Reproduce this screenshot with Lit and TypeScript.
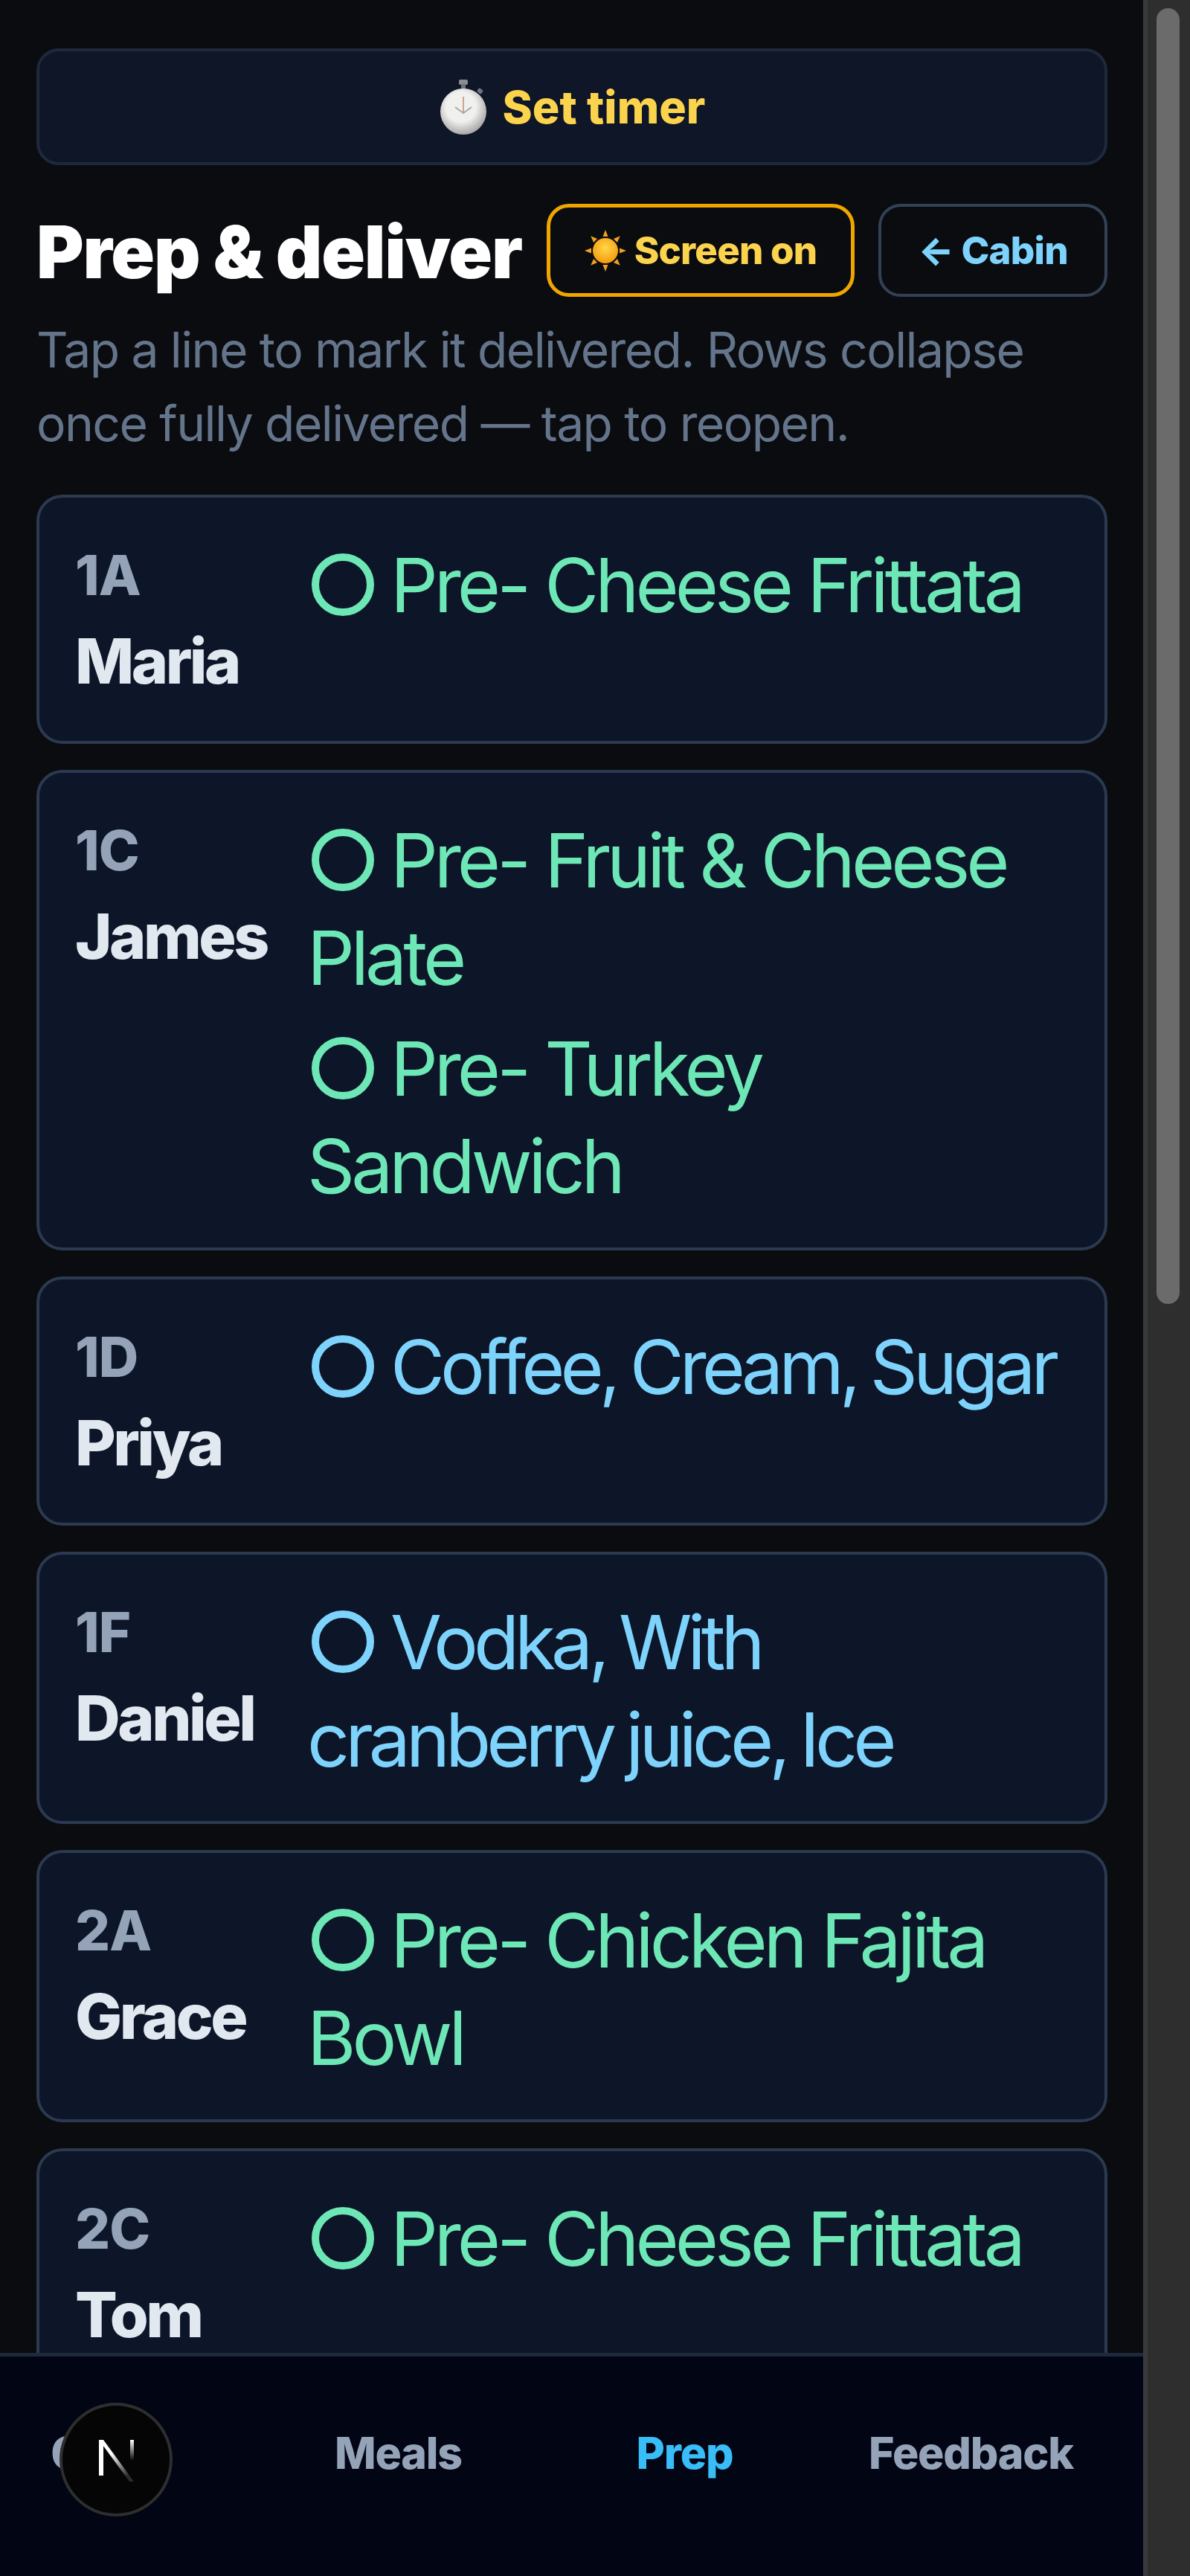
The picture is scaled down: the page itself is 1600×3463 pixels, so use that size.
import { LitElement, html, svg, css } from 'lit';
import { customElement } from 'lit/decorators.js';

type Line = { text: string; kind: 'meal' | 'drink' };
type Seat = { seat: string; name: string; lines: Line[] };

const seats: Seat[] = [
    { seat: '1A', name: 'Maria', lines: [{ text: 'Pre- Cheese Frittata', kind: 'meal' }] },
    {
        seat: '1C',
        name: 'James',
        lines: [
            { text: 'Pre- Fruit & Cheese Plate', kind: 'meal' },
            { text: 'Pre- Turkey Sandwich', kind: 'meal' },
        ],
    },
    { seat: '1D', name: 'Priya', lines: [{ text: 'Coffee, Cream, Sugar', kind: 'drink' }] },
    { seat: '1F', name: 'Daniel', lines: [{ text: 'Vodka, With cranberry juice, Ice', kind: 'drink' }] },
    { seat: '2A', name: 'Grace', lines: [{ text: 'Pre- Chicken Fajita Bowl', kind: 'meal' }] },
    { seat: '2C', name: 'Tom', lines: [{ text: 'Pre- Cheese Frittata', kind: 'meal' }] },
];

const tabs = ['Cabin', 'Meals', 'Prep', 'Feedback'];

@customElement('app-root')
export class AppRoot extends LitElement {
    static styles = css`
    :host {
        display: flex;
        width: 1600px;
        height: 3463px;
        overflow: hidden;
        background: #0a0c10;
        font-family: Inter, "Noto Sans", sans-serif;
    }

    .app {
        width: 1537px;
        height: 100%;
        display: flex;
        flex-direction: column;
    }

    .content {
        flex: 1;
        min-height: 0;
        overflow: hidden;
        padding: 65px 48px 0 49px;
    }

    .timer {
        height: 157px;
        box-sizing: border-box;
        display: flex;
        align-items: center;
        justify-content: center;
        gap: 20px;
        background: #0e1627;
        border: 4px solid #1e293b;
        border-radius: 30px;
        color: #fcd34d;
        font-size: 61px;
        font-weight: 800;
    }

    .head {
        display: flex;
        align-items: center;
        margin-top: 52px;
    }

    h1 {
        flex: 1;
        margin: 4px 0 0;
        color: #fff;
        font-size: 97px;
        font-weight: 900;
        white-space: nowrap;
        letter-spacing: -1.2px;
    }

    .pill {
        height: 125px;
        box-sizing: border-box;
        display: flex;
        align-items: center;
        justify-content: center;
        border-radius: 30px;
        font-size: 51px;
        font-weight: 800;
        letter-spacing: -0.8px;
        white-space: nowrap;
    }

    .screen {
        width: 414px;
        gap: 11px;
        color: #fcd34d;
        border: 5px solid #f0a500;
    }

    .back {
        width: 308px;
        margin-left: 32px;
        color: #7dd3fc;
        border: 4.5px solid #334155;
    }

    .sub {
        margin: 22px 0 46px;
        color: #64748b;
        font-size: 66px;
        line-height: 99px;
        letter-spacing: -1.6px;
    }

    .list {
        display: flex;
        flex-direction: column;
        gap: 35px;
    }

    .card {
        display: grid;
        grid-template-columns: 312px 1fr;
        box-sizing: border-box;
        padding: 52px 50px 44px 48px;
        background: #0d1628;
        border: 4.4px solid #2b3a50;
        border-radius: 35px;
    }

    .seat {
        color: #94a3b8;
        font-size: 74px;
        line-height: 105px;
        font-weight: 800;
        letter-spacing: -1px;
    }

    .name {
        color: #e2e8f0;
        font-size: 84px;
        line-height: 126px;
        font-weight: 800;
        letter-spacing: -3.5px;
    }

    .lines {
        display: flex;
        flex-direction: column;
        gap: 18px;
    }

    .line {
        font-size: 100px;
        line-height: 131px;
        letter-spacing: -5px;
    }

    .meal {
        color: #6ee7b7;
    }

    .drink {
        color: #7dd3fc;
        letter-spacing: -6px;
        word-spacing: -4px;
    }

    .dot {
        display: inline-block;
        width: 84px;
        height: 84px;
        box-sizing: border-box;
        border: 10px solid currentColor;
        border-radius: 50%;
        margin: 0 22px 0 6px;
        vertical-align: -5px;
    }

    nav {
        position: relative;
        height: 300px;
        box-sizing: border-box;
        border-top: 5px solid #1e293b;
        background: #020514;
        overflow: hidden;
    }

    .tabs {
        display: grid;
        grid-template-columns: repeat(4, 385px);
        margin-left: -42px;
        padding-top: 90px;
    }

    .tab {
        text-align: center;
        color: #94a3b8;
        font-size: 59px;
        line-height: 80px;
        font-weight: 800;
        letter-spacing: -1.2px;
    }

    .tab.on {
        color: #38bdf8;
    }

    .badge {
        position: absolute;
        left: 80px;
        top: 62px;
        width: 152px;
        height: 153px;
        box-sizing: border-box;
        border: 4px solid #2e2e2e;
        border-radius: 50%;
        background: #050505;
        display: flex;
        align-items: center;
        justify-content: center;
    }

    .bar {
        width: 63px;
        height: 100%;
        box-sizing: border-box;
        background: #2e2e2e;
        border-left: 6px solid #3a3a3a;
        padding: 11px 14px 0 12px;
    }

    .thumb {
        height: 1742px;
        background: #6b6b6b;
        border-radius: 16px;
    }
   `;

    renderStopwatch() {
        return html`
        <svg width="66" height="76" viewBox="0 0 66 76">
            <defs>
                <radialGradient id="face" cx="0.45" cy="0.4" r="0.65">
                    <stop offset="0.5" stop-color="#f0f0ee"></stop>
                    <stop offset="1" stop-color="#9a9a98"></stop>
                </radialGradient>
            </defs>
            <rect x="27" y="1" width="12" height="7" rx="2" fill="#8a8d92"></rect>
            <rect x="30" y="7" width="6" height="8" fill="#70747a"></rect>
            <rect x="52" y="13" width="7" height="6" rx="1.5" fill="#70747a" transform="rotate(40 55 16)"></rect>
            <circle cx="33" cy="44" r="31" fill="url(#face)"></circle>
            <path d="M33 24V45" stroke="#d2a48c" stroke-width="2" fill="none"></path>
            <path d="M22 38L33 46L44 38" stroke="#a8a8a8" stroke-width="2" fill="none"></path>
        </svg>`;
    }

    renderSun() {
        const rays = [0, 45, 90, 135, 180, 225, 270, 315];
        return html`
        <svg width="56" height="56" viewBox="0 0 56 56">
            <defs>
                <radialGradient id="sun" cx="0.5" cy="0.4" r="0.6">
                    <stop offset="0" stop-color="#ffd84a"></stop>
                    <stop offset="1" stop-color="#f59a0c"></stop>
                </radialGradient>
            </defs>
            ${rays.map((r) => svg`<path d="M28 0L31.5 9H24.5Z" fill="#f2a01e" transform="rotate(${r} 28 28)"></path>`)}
            <circle cx="28" cy="28" r="17" fill="url(#sun)"></circle>
        </svg>`;
    }

    renderCard(s: Seat) {
        return html`
        <div class="card">
            <div>
                <div class="seat">${s.seat}</div>
                <div class="name">${s.name}</div>
            </div>
            <div class="lines">
                ${s.lines.map((l) => html`<div class="line ${l.kind}"><span class="dot"></span>${l.text}</div>`)}
            </div>
        </div>`;
    }

    render() {
        return html`
        <div class="app">
            <div class="content">
                <div class="timer">${this.renderStopwatch()}<span>Set timer</span></div>
                <div class="head">
                    <h1>Prep &amp; deliver</h1>
                    <div class="pill screen">${this.renderSun()}<span>Screen on</span></div>
                    <div class="pill back">← Cabin</div>
                </div>
                <p class="sub">Tap a line to mark it delivered. Rows collapse once fully delivered — tap to reopen.</p>
                <div class="list">${seats.map((s) => this.renderCard(s))}</div>
            </div>
            <nav>
                <div class="tabs">
                    ${tabs.map((t) => html`<div class="tab ${t === 'Prep' ? 'on' : ''}">${t}</div>`)}
                </div>
                <div class="badge">
                    <svg width="60" height="62" viewBox="0 0 60 62">
                        <defs>
                            <linearGradient id="ndiag" x1="0" y1="0" x2="0.6" y2="1">
                                <stop offset="0.4" stop-color="#fff"></stop>
                                <stop offset="1" stop-color="#fff" stop-opacity="0.15"></stop>
                            </linearGradient>
                            <linearGradient id="nright" x1="0" y1="0" x2="0" y2="1">
                                <stop offset="0" stop-color="#fff"></stop>
                                <stop offset="0.7" stop-color="#fff" stop-opacity="0"></stop>
                            </linearGradient>
                        </defs>
                        <path d="M7 4H13V52H7Z" fill="#fff"></path>
                        <path d="M7 4H13L54 60H48Z" fill="url(#ndiag)"></path>
                        <path d="M49 4H54V44H49Z" fill="url(#nright)"></path>
                    </svg>
                </div>
            </nav>
        </div>
        <div class="bar"><div class="thumb"></div></div>
     `;
    }
}

declare global {
    interface HTMLElementTagNameMap {
        'app-root': AppRoot;
    }
}
